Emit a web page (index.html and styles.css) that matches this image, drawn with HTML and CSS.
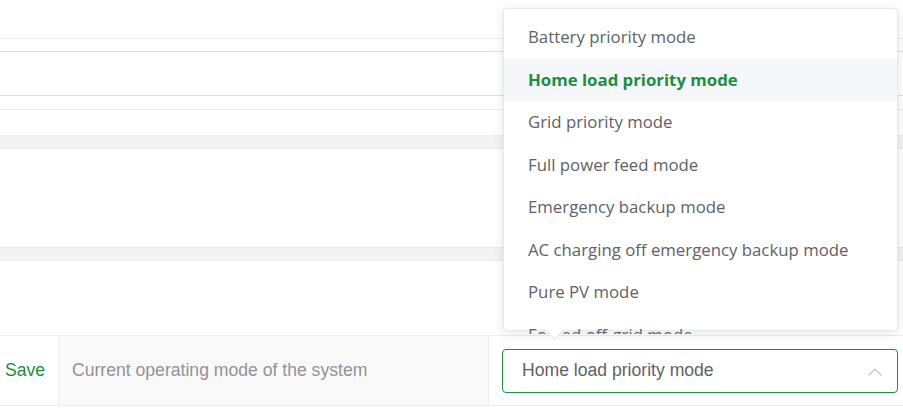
FILE: index.html
```html
<!DOCTYPE html>
<html>
<head>
<meta charset="utf-8">
<link rel="stylesheet" href="styles.css">
</head>
<body>
<div class="page">
  <div class="sp sp38"></div>
  <div class="ln light"></div>
  <div class="sp sp12"></div>
  <div class="ln dark"></div>
  <div class="sp sp43"></div>
  <div class="ln dark"></div>
  <div class="sp sp13"></div>
  <div class="ln light"></div>
  <div class="sp sp25"></div>
  <div class="band band1"></div>
  <div class="sp sp98"></div>
  <div class="band band2"></div>
  <div class="sp sp74"></div>
  <div class="row">
    <div class="cell save">Save</div>
    <div class="cell label">Current operating mode of the system</div>
    <div class="cell value">
      <div class="select">
        <span class="sel-text">Home load priority mode</span>
        <svg class="chev" width="16" height="10" viewBox="0 0 16 10"><path d="M1.5 8.5 L8 2 L14.5 8.5" fill="none" stroke="#c0c4cc" stroke-width="1.2"/></svg>
      </div>
    </div>
  </div>
</div>
<div class="dropdown">
  <ul class="list">
    <li>Battery priority mode</li>
    <li class="selected">Home load priority mode</li>
    <li>Grid priority mode</li>
    <li>Full power feed mode</li>
    <li>Emergency backup mode</li>
    <li>AC charging off emergency backup mode</li>
    <li>Pure PV mode</li>
    <li>Forced off-grid mode</li>
  </ul>
  <div class="arrow"></div>
</div>
</body>
</html>
```
FILE: styles.css
```css
html, body { margin: 0; padding: 0; background: #fff; }
body { width: 903px; height: 413px; overflow: hidden; position: relative; font-family: "Liberation Sans", Arial, sans-serif; }
.page { display: flex; flex-direction: column; }
.sp38 { height: 38px; }
.sp12 { height: 12px; }
.sp43 { height: 43px; }
.sp13 { height: 13px; }
.sp25 { height: 25px; }
.sp98 { height: 98px; }
.sp74 { height: 74px; }
.ln { height: 1px; }
.ln.light { background: #ebebf1; }
.ln.dark { background: #dcdce2; }
.band { background: #f3f3f4; }
.band1 { height: 12px; border-top: 1px solid #ededf0; border-bottom: 1px solid #e8e8ef; }
.band2 { height: 12px; border-top: 1px solid #e9e9ec; border-bottom: 1px solid #ececef; }
.row { display: flex; height: 69px; border-top: 1px solid #ececf2; border-bottom: 1px solid #ececf2; }
.cell { display: flex; align-items: center; font-size: 17.6px; }
.save { width: 53px; padding-left: 5px; color: #1e8e3e; border-right: 1px solid #ececf2; }
.label { width: 416px; padding-left: 13px; background: #f9f9fa; color: #909399; border-right: 1px solid #ececf2; }
.value { flex: 1; padding-left: 13px; }
.select { width: 361px; height: 42px; border: 1px solid #1e8e3e; border-radius: 4px; display: flex; align-items: center; justify-content: space-between; padding: 0 14px 0 19px; box-sizing: content-box; }
.sel-text { color: #606266; font-size: 17.6px; }
.chev { display: block; margin-top: 2px; }
.dropdown { position: absolute; left: 503px; top: 8px; width: 395px; height: 323px; background: #fff; border: 1px solid #e4e7ed; border-radius: 4px; box-shadow: 0 2px 12px rgba(0,0,0,0.1); box-sizing: border-box; }
.list { list-style: none; margin: 0; padding: 7px 0 0; height: 318px; overflow: hidden; }
.list li { height: 42.5px; line-height: 42.5px; padding-left: 24px; font-family: "Open Sans", "Noto Sans", sans-serif; font-size: 16.8px; color: #606266; white-space: nowrap; }
.list li.selected { background: #f5f7fa; color: #1e8e3e; font-weight: 700; }
.arrow { position: absolute; left: 44px; bottom: -7px; width: 12px; height: 12px; background: #fff; border-right: 1px solid #e4e7ed; border-bottom: 1px solid #e4e7ed; transform: rotate(45deg); }
```
